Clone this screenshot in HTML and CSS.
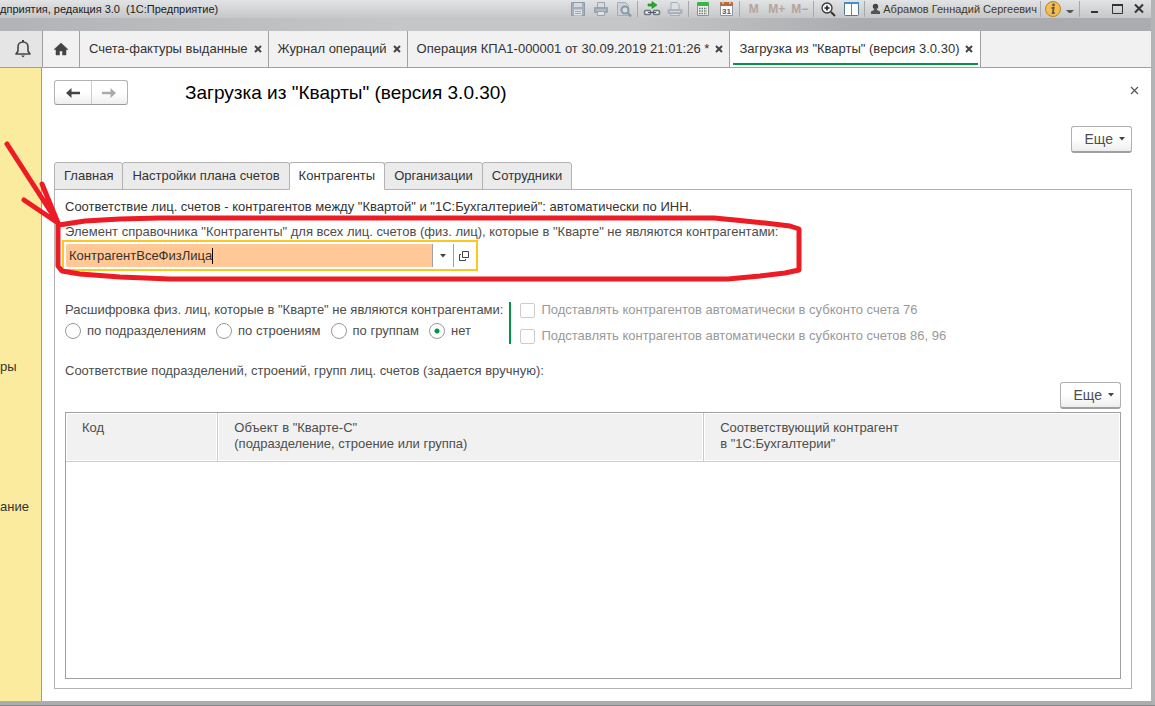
FILE: index.html
```
<!DOCTYPE html>
<html lang="ru">
<head>
<meta charset="utf-8">
<title>Загрузка из "Кварты"</title>
<link rel="stylesheet" href="styles.css">
</head>
<body>
<div class="window">
  <header class="titlebar">
    <span class="app-title">дприятия, редакция 3.0&nbsp; (1С:Предприятие)</span>
    <div class="tools">
      <button class="tool" aria-label="Сохранить"><svg width="18" height="18" viewBox="0 0 18 18"><path d="M2.500 2.500h13v13h-13z" fill="#a5b0bf" stroke="#8f9bab"/><path d="M5 3h8v4H5z" fill="#d5d9de"/><path d="M5 9.500h8v6H5z" fill="#e0e3e6"/><path d="M6 11.500h6M6 13.500h6" stroke="#9ca8b6"/></svg></button>
      <button class="tool" aria-label="Печать"><svg width="18" height="18" viewBox="0 0 18 18"><path d="M5.500 7V2.500h7V7" fill="#d9dcdf" stroke="#9aa3ad"/><rect x="2" y="7" width="14" height="6" rx="1" fill="#98a4b1"/><path d="M4 10h10" stroke="#cbd0d5"/><path d="M5.500 11.500h7v4h-7z" fill="#dfe1e3" stroke="#9aa3ad"/></svg></button>
      <button class="tool" aria-label="Просмотр"><svg width="18" height="18" viewBox="0 0 18 18"><path d="M2.500 2.500h8l3 3v10h-11z" fill="#cdd1d5" stroke="#a6adb4"/><circle cx="10" cy="10" r="3.500" fill="#d5dde3" stroke="#8999a8" stroke-width="2"/><path d="M12.500 12.500l3.500 4" stroke="#8999a8" stroke-width="2.500"/></svg></button>
      <span class="sep"></span>
      <button class="tool" aria-label="Получить ссылку"><svg width="18" height="18" viewBox="0 0 18 18"><path d="M5 4h4V1.500l5 3.500-5 3.500V6H5z" fill="#24ac25" stroke="#16861a" stroke-width=".6"/><rect x="1.500" y="10.500" width="6" height="4" rx="1" fill="#eee" stroke="#6d7781" stroke-width="1.500"/><rect x="10.500" y="10.500" width="6" height="4" rx="1" fill="#eee" stroke="#6d7781" stroke-width="1.500"/><path d="M5 12.500h8" stroke="#4e5963"/></svg></button>
      <button class="tool" aria-label="Перейти по ссылке"><svg width="18" height="18" viewBox="0 0 18 18"><path d="M5 9V2.500h6l2 2V9" fill="#dce0e4" stroke="#a5adb7"/><rect x="1.500" y="9" width="15" height="5" rx="1" fill="#abb3be"/><path d="M4 11.500h10" stroke="#d5d8dc"/><path d="M4.500 13.500h9v2h-9z" fill="#ddd" stroke="#a5adb7"/></svg></button>
      <span class="sep"></span>
      <button class="tool" aria-label="Калькулятор"><svg width="18" height="18" viewBox="0 0 18 18"><path d="M3.500 5.500h11v10h-11z" fill="#eef0ee" stroke="#8b938b"/><rect x="3" y="2" width="12" height="4" rx="1" fill="#38b749"/><path d="M5 8.500h8M5 11h8M5 13.500h8" stroke="#6d786d" stroke-width="1.500" stroke-dasharray="1.500 1"/></svg></button>
      <button class="tool" aria-label="Календарь"><svg width="18" height="18" viewBox="0 0 18 18"><path d="M3.500 5.500h12v10h-12z" fill="#f8fafc" stroke="#8d96a4"/><rect x="3" y="2" width="13" height="4" rx="1" fill="#b8693c"/><path d="M6 1v3M13 1v3" stroke="#edc6aa" stroke-width="1.500"/><text x="9.500" y="14" class="cal-num">31</text></svg></button>
      <span class="sep"></span>
      <button class="tool memory">M</button>
      <button class="tool memory">M+</button>
      <button class="tool memory">M−</button>
      <span class="sep"></span>
      <button class="tool" aria-label="Масштаб"><svg width="18" height="18" viewBox="0 0 18 18"><circle cx="8" cy="8" r="5" fill="#f6f6f6" stroke="#363636" stroke-width="1.300"/><path d="M5.500 8h5M8 5.500v5" stroke="#222" stroke-width="1.600"/><path d="M12 12l4 4" stroke="#333" stroke-width="2"/></svg></button>
      <button class="tool" aria-label="Панели"><svg width="18" height="18" viewBox="0 0 18 18"><rect x="2.500" y="2.500" width="14" height="13" rx="1" fill="#fff" stroke="#587590"/><path d="M2 2h15v2H2z" fill="#3c91d4"/><path d="M9.500 4v11" stroke="#6f8192"/></svg></button>
      <span class="sep"></span>
      <button class="user"><svg width="11" height="12" viewBox="0 0 11 12"><circle cx="5.500" cy="3.500" r="2.700" fill="#444"/><path d="M4 5h3v2l3 1.500V11H1V8.500L4 7z" fill="#555"/></svg>Абрамов Геннадий Сергеевич</button>
      <span class="sep"></span>
      <button class="tool info" aria-label="Информация"><svg width="18" height="18" viewBox="0 0 18 18"><circle cx="9" cy="9" r="7.500" fill="#f3bd54" stroke="#b98325"/><circle cx="9.500" cy="5" r="1.400" fill="#665a43"/><path d="M7.500 8h2.200L8.700 13h2" fill="none" stroke="#665a43" stroke-width="1.800"/></svg></button>
      <button class="drop" aria-label="Меню"><svg width="10" height="8" viewBox="0 0 10 8"><path d="M1 5h8L6 8H4z" fill="#555"/></svg></button>
      <span class="sep"></span>
      <button class="tool" aria-label="Свернуть"><svg width="18" height="18" viewBox="0 0 18 18"><path d="M6 12h7" stroke="#333" stroke-width="2"/></svg></button>
      <button class="tool" aria-label="Развернуть"><svg width="18" height="18" viewBox="0 0 18 18"><path d="M4.500 5v8.500h10V5" fill="none" stroke="#333"/><path d="M4 5h11" stroke="#333" stroke-width="2"/></svg></button>
      <button class="tool" aria-label="Закрыть"><svg width="18" height="18" viewBox="0 0 18 18"><path d="M4 4.500l8 8M12 4.500l-8 8" stroke="#333" stroke-width="2"/></svg></button>
    </div>
  </header>

  <nav class="tabs">
    <button class="bell" aria-label="Оповещения"><svg width="18" height="20" viewBox="0 0 18 20"><path d="M2 15h14l-2-3V8c0-3-2-5-5-5S4 5 4 8v4z" fill="none" stroke="#444" stroke-width="1.600" stroke-linejoin="round"/><path d="M9 1v2" stroke="#444" stroke-width="2"/><path d="M7 16.500h4l-2 2z" fill="#444"/></svg></button>
    <button class="tab home" aria-label="Начальная страница"><svg width="16" height="14" viewBox="0 0 16 14"><path d="M8 1l7 6.500h-2V13H9.500V9h-3v4H3V7.500H1z" fill="#444" stroke="#444" stroke-width=".5"/></svg></button>
    <button class="tab">Счета-фактуры выданные<svg class="x" viewBox="0 0 8 8"><path d="M1 1l6 6M7 1L1 7"/></svg></button>
    <button class="tab">Журнал операций<svg class="x" viewBox="0 0 8 8"><path d="M1 1l6 6M7 1L1 7"/></svg></button>
    <button class="tab">Операция КПА1-000001 от 30.09.2019 21:01:26 *<svg class="x" viewBox="0 0 8 8"><path d="M1 1l6 6M7 1L1 7"/></svg></button>
    <button class="tab current">Загрузка из "Кварты" (версия 3.0.30)<svg class="x" viewBox="0 0 8 8"><path d="M1 1l6 6M7 1L1 7"/></svg></button>
  </nav>

  <div class="body">
    <nav class="sections">
      <a href="#">ры</a>
      <a href="#">ание</a>
    </nav>
    <main class="form">
      <div class="form-head">
        <div class="history">
          <button aria-label="Назад"><svg width="16" height="12" viewBox="0 0 16 12"><path d="M1 6l5.500-5v3.700H15v2.600H6.500V11z" fill="#444"/></svg></button>
          <button aria-label="Вперед"><svg width="16" height="12" viewBox="0 0 16 12"><path d="M15 6L9.500 1v3.700H1v2.600h8.500V11z" fill="#aaa"/></svg></button>
        </div>
        <h1>Загрузка из "Кварты" (версия 3.0.30)</h1>
        <button class="close" aria-label="Закрыть"><svg width="9" height="9" viewBox="0 0 9 9"><path d="M1 1l7 7M8 1L1 8" stroke="#555" stroke-width="1.200"/></svg></button>
      </div>
      <div class="commands"><button class="more">Еще<svg width="6" height="4" viewBox="0 0 6 4"><path d="M0 0h6L3 3.500z" fill="#444"/></svg></button></div>

      <div class="pages" role="tablist">
        <button role="tab">Главная</button>
        <button role="tab">Настройки плана счетов</button>
        <button role="tab" aria-selected="true" class="selected">Контрагенты</button>
        <button role="tab">Организации</button>
        <button role="tab">Сотрудники</button>
      </div>
      <section class="page">
        <p class="note">Соответствие лиц. счетов - контрагентов между "Квартой" и "1С:Бухгалтерией": автоматически по ИНН.</p>
        <label class="caption" for="agent">Элемент справочника "Контрагенты" для всех лиц. счетов (физ. лиц), которые в "Кварте" не являются контрагентами:</label>
        <div class="picker">
          <div class="field"><input id="agent" type="text" value="КонтрагентВсеФизЛица"><span class="caret"></span></div>
          <button aria-label="Выбрать"><svg width="6" height="4" viewBox="0 0 6 4"><path d="M0 0h6L3 3.500z" fill="#444"/></svg></button>
          <button aria-label="Открыть"><svg width="10" height="10" viewBox="0 0 10 10"><path d="M3.500.5h6v6h-6zM2 3.500H.5v6h6V8" fill="none" stroke="#444"/></svg></button>
        </div>

        <div class="options">
          <fieldset class="kinds">
            <legend>Расшифровка физ. лиц, которые в "Кварте" не являются контрагентами:</legend>
            <div class="radios">
              <label><input type="radio" name="kind">по подразделениям</label>
              <label><input type="radio" name="kind">по строениям</label>
              <label><input type="radio" name="kind">по группам</label>
              <label><input type="radio" name="kind" checked>нет</label>
            </div>
          </fieldset>
          <div class="checks">
            <label><input type="checkbox" disabled>Подставлять контрагентов автоматически в субконто счета 76</label>
            <label><input type="checkbox" disabled>Подставлять контрагентов автоматически в субконто счетов 86, 96</label>
          </div>
        </div>

        <p class="list-title">Соответствие подразделений, строений, групп лиц. счетов (задается вручную):</p>
        <div class="list-bar"><button class="more">Еще<svg width="6" height="4" viewBox="0 0 6 4"><path d="M0 0h6L3 3.500z" fill="#444"/></svg></button></div>
        <div class="grid">
          <table>
            <thead><tr>
              <th class="code">Код</th>
              <th class="object">Объект в "Кварте-С"<br>(подразделение, строение или группа)</th>
              <th>Соответствующий контрагент<br>в "1С:Бухгалтерии"</th>
            </tr></thead>
          </table>
        </div>
      </section>
    </main>
  </div>
  <svg class="marker" width="820" height="300" viewBox="0 0 820 300" aria-hidden="true">
    <path d="M7 144L58 223M24 200L58 223M42 184L58 223"/>
    <path d="M59 225L85 221L120 219L160 218H714L735 220L765 223L790 226L799 229V270L785 273L760 276L728 279H170L120 277L80 274L62 271L58 266V225"/>
  </svg>
</div>
</body>
</html>
```
FILE: styles.css
```
* { box-sizing: border-box; }
body {
  margin: 0;
  font: 13px/16px "Liberation Sans", Arial, sans-serif;
  color: #4d4d4d;
  background: #848587;
}
button {
  font: inherit;
  color: inherit;
  margin: 0;
  padding: 0;
  border: 0;
  background: none;
}
p, h1 { margin: 0; }

.window {
  position: relative;
  display: flex;
  flex-direction: column;
  min-height: calc(100vh - 1px);
  overflow: hidden;
  background: #fff;
  border-right: 4px solid #b3b4b6;
  border-bottom: 4px solid #acadb0;
}

/* title bar */
.titlebar {
  display: flex;
  justify-content: space-between;
  height: 31px;
  padding-bottom: 13px;
  white-space: nowrap;
  background:
    linear-gradient(#e2e3e4, #c6c7c9) 0 0 / 100% 18px no-repeat,
    linear-gradient(90deg, #b2b3b6, #c5c6c7 35%, #c5c6c7 55%, #abacaf 75%, #abacaf);
}
.app-title {
  font-size: 11px;
  line-height: 18px;
  color: #1b1b1b;
}
.tools { display: flex; align-items: center; height: 18px; }
.tool {
  display: flex;
  justify-content: center;
  align-items: center;
  width: 23px;
}
.memory { font-size: 12px; font-weight: bold; color: #b4a59c; }
.cal-num {
  font: bold 8px "Liberation Sans", Arial, sans-serif;
  text-anchor: middle;
  fill: #55606f;
}
.sep { width: 1px; height: 16px; margin: 0 2px; background: #a8a8a8; }
.user {
  display: flex;
  align-items: center;
  gap: 2px;
  padding: 0 1px 0 3px;
  font-size: 11px;
  color: #46381c;
}
.info { width: 20px; }
.drop { width: 14px; }

/* open windows */
.tabs {
  display: flex;
  height: 37px;
  background: #f1f1f1;
  border-bottom: 1px solid #a0a0a0;
  white-space: nowrap;
}
.bell {
  display: flex;
  align-items: center;
  justify-content: flex-end;
  width: 42px;
  padding-right: 10px;
  background: #e5e5e5;
}
.tab {
  display: flex;
  align-items: center;
  gap: 6px;
  padding: 0 6px 0 9px;
  border-left: 1px solid #a0a0a0;
  color: #333;
}
.home { width: 37px; padding: 0 10px; }
.current {
  padding-right: 7px;
  border-right: 1px solid #a0a0a0;
  background: linear-gradient(#009646, #009646) center 32px / calc(100% - 5px) 2px no-repeat #fff;
}
.x { width: 8px; height: 8px; fill: none; stroke: #444; stroke-width: 2; }

/* section panel and form */
.body { display: flex; flex: 1; }
.sections {
  display: flex;
  flex-direction: column;
  gap: 124px;
  width: 42px;
  padding-top: 291px;
  background: #fbeb9e;
  border-right: 1px solid #b3a62a;
}
.sections a { color: #333; text-decoration: none; }
.form {
  display: flex;
  flex: 1;
  flex-direction: column;
  min-width: 0;
  padding: 12px 19px 12px 12px;
}
.form-head { display: flex; align-items: center; height: 25px; }
.history {
  display: flex;
  width: 74px;
  height: 25px;
  border: 1px solid #b3b3b3;
  border-bottom-color: #999;
  border-radius: 3px;
  background: linear-gradient(#fff 50%, #eee);
}
.history button {
  display: flex;
  flex: 1;
  align-items: center;
  justify-content: center;
}
.history button + button { border-left: 1px solid #ccc; }
h1 {
  flex: 1;
  margin-left: 57px;
  font-size: 19px;
  line-height: 26px;
  font-weight: normal;
  color: #000;
}
.close { width: 9px; height: 20px; margin-right: -7px; display: flex; }
.close svg { margin-top: 3px; }
.commands { display: flex; justify-content: flex-end; margin: 21px 0 9px; }
.more {
  display: flex;
  align-items: center;
  justify-content: flex-end;
  gap: 6px;
  width: 61px;
  height: 27px;
  padding-right: 6px;
  border: 1px solid #b0b0b0;
  border-bottom: 2px solid #a0a0a0;
  border-radius: 3px;
  background: linear-gradient(#fff 50%, #ededed);
  font-size: 14px;
}

.pages { display: flex; height: 28px; margin-bottom: -1px; }
.pages button {
  padding: 0 9px;
  border: 1px solid #b3b3b3;
  border-radius: 3px 3px 0 0;
  background: #ebebeb;
  color: #333;
}
.pages button + button { margin-left: -1px; }
.pages .selected { background: #fff; border-bottom-color: #fff; z-index: 1; }
.page {
  display: flex;
  flex: 1;
  flex-direction: column;
  padding: 9px 10px;
  border: 1px solid #b3b3b3;
}
.note { color: #333; }
.caption { margin-top: 9px; }
.picker {
  display: flex;
  align-self: flex-start;
  width: 416px;
  height: 31px;
  margin-left: -3px;
  padding: 2px;
  border: 2px solid #fac823;
}
.field {
  display: flex;
  flex: 1;
  align-items: center;
  min-width: 0;
  padding: 0 3px;
  border-radius: 2px 0 0 2px;
  background: #ffc896;
}
.field input {
  field-sizing: content;
  padding: 0;
  border: 0;
  outline: 0;
  background: none;
  font: inherit;
  color: #333;
}
.caret { width: 1px; height: 16px; background: #000; }
.picker button {
  display: flex;
  align-items: center;
  justify-content: center;
  width: 21px;
  border-left: 1px solid #a0a0a0;
}

.options { display: flex; gap: 6px; margin-top: 31px; }
.kinds { margin: 0; padding: 0; border: 0; min-width: 0; }
.kinds legend { padding: 0; }
.radios { display: flex; gap: 10px; margin-top: 5px; }
.radios label, .checks label { display: flex; align-items: center; }
.radios input {
  appearance: none;
  width: 16px;
  height: 16px;
  margin: 0 6px 0 0;
  border: 1px solid #999;
  border-radius: 50%;
  background: #fff;
}
.radios input:checked { background: radial-gradient(circle, #009646 2px, #fff 3px); }
.checks {
  display: flex;
  flex-direction: column;
  gap: 10px;
  padding-left: 9px;
  border-left: 2px solid #009646;
  color: #999;
}
.checks input {
  appearance: none;
  width: 15px;
  height: 15px;
  margin: 0 6px 0 0;
  border: 1px solid #ccc;
  border-radius: 2px;
}

.list-title { margin-top: 19px; }
.list-bar { display: flex; justify-content: flex-end; margin: 3px 0; }
.grid { flex: 1; border: 1px solid #a0a0a0; }
table { width: 100%; border-collapse: collapse; table-layout: fixed; }
th {
  height: 48px;
  padding: 7px 16px;
  border-bottom: 1px solid #ccc;
  border-right: 1px solid #ccc;
  background: #f1f1f1;
  box-shadow: inset 0 0 0 1px #fff;
  font-weight: normal;
  text-align: left;
  vertical-align: top;
}
th:last-child { border-right: 0; }
.code { width: 14.4%; }
.object { width: 46.1%; }

/* hand-drawn callout over the form */
.marker { position: absolute; left: 0; top: 0; pointer-events: none; }
.marker path {
  fill: none;
  stroke: #ed1c24;
  stroke-width: 5;
  stroke-linecap: round;
  stroke-linejoin: round;
}
```
